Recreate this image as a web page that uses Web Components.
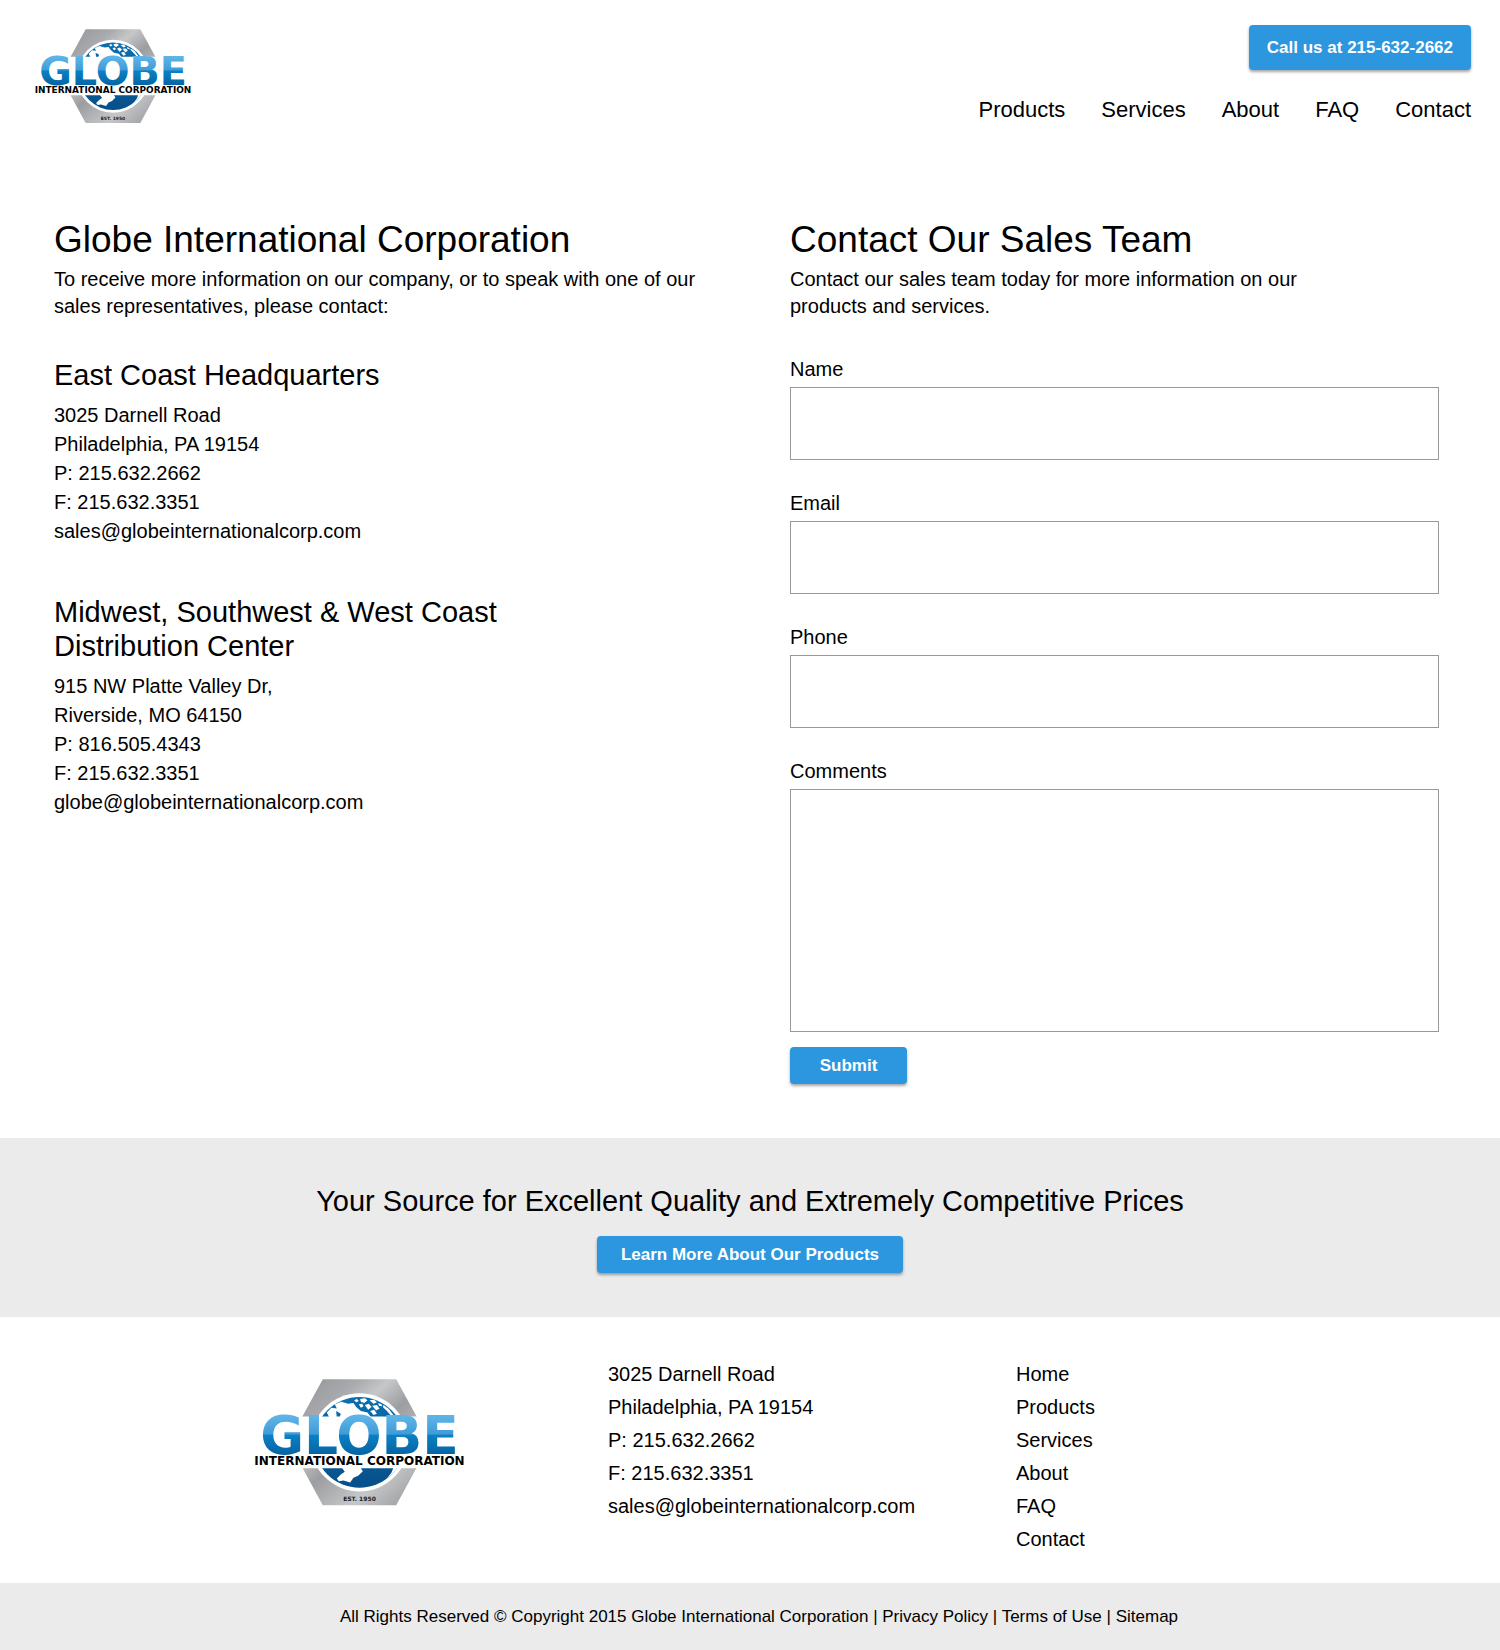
<!DOCTYPE html>
<html lang="en">
<head>
<meta charset="utf-8">
<meta name="viewport" content="width=device-width, initial-scale=1">
<title>Contact | Globe International Corporation</title>
<style>
  body { margin: 0; background: #fff; color: #000; font: 20px/29px Arial, "Liberation Sans", sans-serif; }
</style>
</head>
<body>
<globe-page></globe-page>

<script>
const define = (name, html, setup) => {
  const template = document.createElement('template');
  template.innerHTML = html;
  customElements.define(name, class extends HTMLElement {
    constructor() {
      super();
      this.attachShadow({ mode: 'open' }).append(template.content.cloneNode(true));
    }
    connectedCallback() { if (setup) setup(this, this.shadowRoot); }
  });
};

define('globe-logo', `
  <style>
    :host { display: block; }
    a { display: block; }
    svg { display: block; width: 100%; height: auto; }
    text { font-family: "DejaVu Sans", sans-serif; font-weight: bold; text-anchor: middle; }
  </style>
  <a href="#" aria-label="Globe International Corporation home">
    <svg viewBox="38 26 644 379">
      <defs>
        <linearGradient id="steel" x1="0" y1="0" x2="1" y2="1">
          <stop offset="0" stop-color="#8f9093"/><stop offset=".25" stop-color="#a9aaad"/>
          <stop offset=".36" stop-color="#c6c7c9"/><stop offset=".5" stop-color="#9c9da0"/>
          <stop offset=".72" stop-color="#c6c7c9"/><stop offset="1" stop-color="#8c8d90"/>
        </linearGradient>
        <linearGradient id="sea" x1="0" y1="0" x2="0" y2="1">
          <stop offset="0" stop-color="#0a6fb0"/><stop offset="1" stop-color="#064f8a"/>
        </linearGradient>
        <linearGradient id="word" gradientUnits="userSpaceOnUse" x1="0" y1="138" x2="0" y2="252">
          <stop offset="0" stop-color="#5fb4e6"/><stop offset=".46" stop-color="#3f9cd8"/>
          <stop offset=".5" stop-color="#0b80c4"/><stop offset="1" stop-color="#0564a3"/>
        </linearGradient>
        <clipPath id="disc"><circle cx="360" cy="216" r="136"/></clipPath>
      </defs>
      <path d="M250 27H470L573 215L470 404H250L147 215Z" fill="url(#steel)"/>
      <circle cx="360" cy="216" r="147" fill="#fff"/>
      <circle cx="360" cy="216" r="136" fill="url(#sea)"/>
      <g clip-path="url(#disc)" fill="#fff">
        <path d="M262 126L276 112L292 114L286 102L306 94L326 100L342 98L350 110L364 122L384 126L396 142H300L304 130L290 122L292 142H270Z"/>
        <path d="M344 90L352 86L358 92L350 96ZM362 86L376 84L384 90L374 98L364 94ZM390 90L404 88L412 96L402 100ZM358 102L368 100L372 108L364 112ZM376 104L388 100L396 110L386 118ZM398 106L412 104L420 114L410 120ZM392 122L404 118L412 130L402 134ZM416 98L426 102L428 108L418 106Z"/>
        <path d="M432 104L448 116L466 140H458L442 122L430 110Z"/>
        <path d="M306 290H362L370 302L356 316L342 322L332 336L312 330L298 332L292 324L304 312L316 304Z"/>
        <path d="M462 290H482L464 318L440 338L424 344L428 336L444 322L456 306Z"/>
      </g>
      <path d="M38 138H682V293H38Z" fill="#fff"/>
      <text x="360" y="252" font-size="160" fill="url(#word)">GLOBE</text>
      <text x="360" y="285" font-size="36" fill="#000">INTERNATIONAL CORPORATION</text>
      <text x="360" y="391" font-size="18" fill="#222">EST. 1950</text>
    </svg>
  </a>`);

define('action-link', `
  <style>
    :host { display: inline-block; }
    a, button {
      display: block; box-sizing: border-box; width: 100%; margin: 0; border: 0; border-radius: 4px;
      padding: var(--pad, 8px 24px); background: #2c96df; color: #fff; text-align: center;
      font: bold 17px/21px Arial, "Liberation Sans", sans-serif; text-decoration: none; white-space: nowrap;
      box-shadow: 0 2px 3px rgba(0, 0, 0, .35); cursor: pointer;
    }
  </style>
  <a href="#"><slot></slot></a>`,
  (host, root) => {
    if (!host.hasAttribute('submit')) return;
    const button = document.createElement('button');
    button.type = 'submit';
    button.append(document.createElement('slot'));
    root.querySelector('a').replaceWith(button);
  });

define('site-header', `
  <style>
    :host { display: block; }
    header { display: flex; justify-content: space-between; align-items: flex-start; padding: 25px 29px 0 33px; }
    globe-logo { width: 160px; margin-top: 4px; }
    .side { display: flex; flex-direction: column; align-items: flex-end; gap: 27px; }
    action-link { --pad: 12px 18px; }
    nav { display: flex; gap: 36px; font-size: 22px; line-height: 26px; }
    a { color: inherit; text-decoration: none; }
  </style>
  <header>
    <globe-logo></globe-logo>
    <div class="side">
      <action-link>Call us at 215-632-2662</action-link>
      <nav><a href="#">Products</a><a href="#">Services</a><a href="#">About</a><a href="#">FAQ</a><a href="#">Contact</a></nav>
    </div>
  </header>`);

define('office-card', `
  <style>
    :host { display: block; }
    h2 { max-width: 480px; margin: 0 0 9px; font-size: 29px; line-height: 34px; font-weight: normal; }
    address { font-style: normal; white-space: pre-line; }
  </style>
  <h2><slot name="title"></slot></h2>
  <address><slot></slot></address>`);

define('form-field', `
  <style>
    :host { display: block; }
    label { display: block; margin-bottom: 4px; line-height: 27px; }
    input, textarea {
      display: block; box-sizing: border-box; width: 100%; height: 73px; margin: 0; padding: 8px 12px;
      border: 1px solid #999; border-radius: 0; background: #fff; font: inherit; resize: none; outline: 0;
    }
    textarea { height: 243px; }
  </style>
  <label for="control"></label>`,
  (host, root) => {
    const type = host.getAttribute('type');
    const control = document.createElement(type === 'textarea' ? 'textarea' : 'input');
    if (type !== 'textarea') control.type = type;
    control.id = 'control';
    root.querySelector('label').textContent = host.getAttribute('label');
    root.append(control);
  });

define('contact-section', `
  <style>
    :host { display: block; }
    main { display: grid; grid-template-columns: 1fr 1fr; gap: 87px; padding: 95px 61px 54px 54px; }
    h1 { margin: 0; font-size: 37px; line-height: 44px; font-weight: normal; }
    p { margin: 4px 0 0; line-height: 27px; }
    .narrow { max-width: 540px; }
    office-card { margin-top: 38px; }
    office-card + office-card { margin-top: 49px; }
    form { display: flex; flex-direction: column; gap: 30px; margin-top: 36px; }
    action-link { align-self: flex-start; width: 117px; margin-top: -15px; }
  </style>
  <main>
    <section>
      <h1>Globe International Corporation</h1>
      <p>To receive more information on our company, or to speak with one of our sales representatives, please contact:</p>
      <office-card><span slot="title">East Coast Headquarters</span>3025 Darnell Road<br>Philadelphia, PA 19154<br>P: 215.632.2662<br>F: 215.632.3351<br>sales@globeinternationalcorp.com</office-card>
      <office-card><span slot="title">Midwest, Southwest &amp; West Coast Distribution Center</span>915 NW Platte Valley Dr,<br>Riverside, MO 64150<br>P: 816.505.4343<br>F: 215.632.3351<br>globe@globeinternationalcorp.com</office-card>
    </section>
    <section>
      <h1>Contact Our Sales Team</h1>
      <p class="narrow">Contact our sales team today for more information on our products and services.</p>
      <form>
        <form-field label="Name" type="text"></form-field>
        <form-field label="Email" type="email"></form-field>
        <form-field label="Phone" type="tel"></form-field>
        <form-field label="Comments" type="textarea"></form-field>
        <action-link submit>Submit</action-link>
      </form>
    </section>
  </main>`);

define('promo-band', `
  <style>
    :host { display: flex; flex-direction: column; align-items: center; gap: 17px; padding: 46px 24px 44px; background: #ebebeb; }
    h2 { margin: 0; font-size: 29px; line-height: 35px; font-weight: normal; text-align: center; }
  </style>
  <h2>Your Source for Excellent Quality and Extremely Competitive Prices</h2>
  <action-link>Learn More About Our Products</action-link>`);

define('site-footer', `
  <style>
    :host { display: block; }
    .columns { display: grid; grid-template-columns: 356fr 408fr 234fr; padding: 41px 250px 27px 252px; line-height: 33px; }
    globe-logo { width: 215px; margin-top: 21px; }
    address { font-style: normal; }
    nav { display: flex; flex-direction: column; align-items: flex-start; }
    a { color: inherit; text-decoration: none; }
    .legal { padding: 19px 0 19px 18px; background: #ebebeb; text-align: center; font-size: 17px; line-height: 29px; }
  </style>
  <footer>
    <div class="columns">
      <globe-logo></globe-logo>
      <address>3025 Darnell Road<br>Philadelphia, PA 19154<br>P: 215.632.2662<br>F: 215.632.3351<br>sales@globeinternationalcorp.com</address>
      <nav><a href="#">Home</a><a href="#">Products</a><a href="#">Services</a><a href="#">About</a><a href="#">FAQ</a><a href="#">Contact</a></nav>
    </div>
    <div class="legal">All Rights Reserved © Copyright 2015 Globe International Corporation | <a href="#">Privacy Policy</a> | <a href="#">Terms of Use</a> | <a href="#">Sitemap</a></div>
  </footer>`);

define('globe-page', `
  <style>:host { display: block; }</style>
  <site-header></site-header>
  <contact-section></contact-section>
  <promo-band></promo-band>
  <site-footer></site-footer>`);
</script>
</body>
</html>
